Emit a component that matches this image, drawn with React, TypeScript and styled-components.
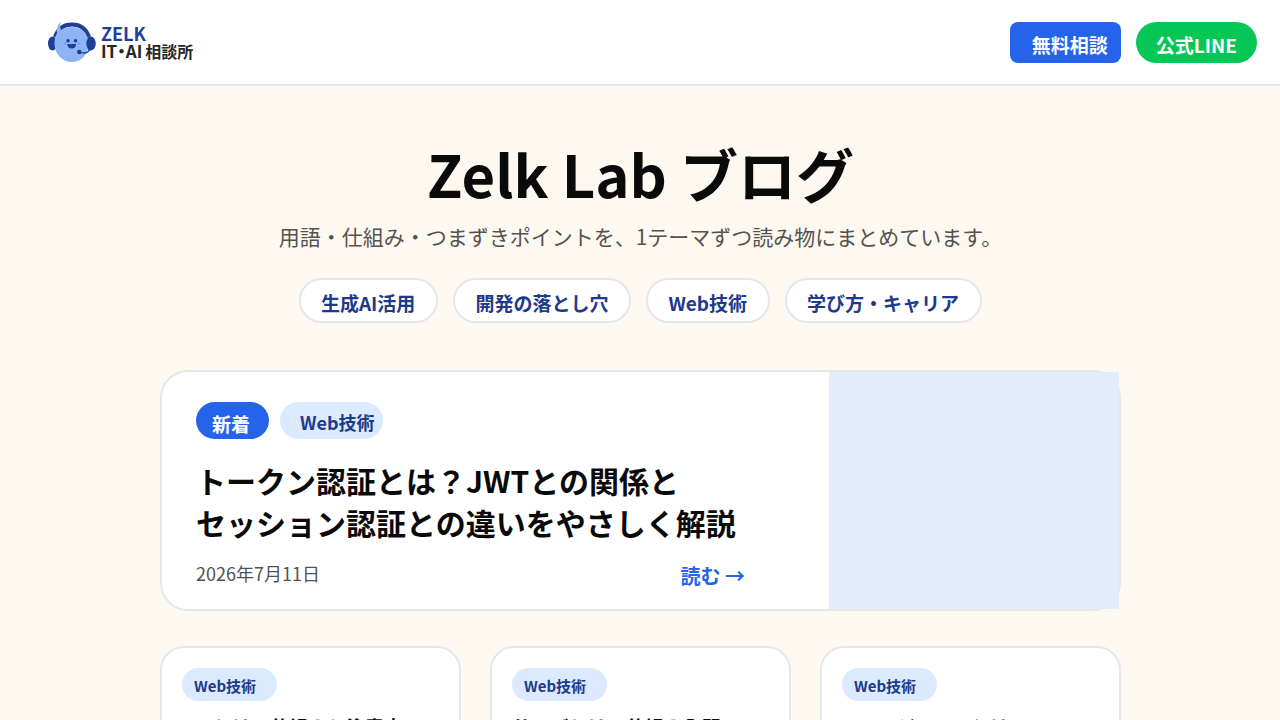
import React from "react";
import styled, { createGlobalStyle } from "styled-components";

const color = {
  cream: "#fef9f0",
  line: "#e5e7eb",
  blue: "#2563eb",
  navy: "#1e3a8a",
  sky: "#dbeafe",
  panel: "#e5edfb",
  green: "#06c755",
  ink: "#0a0a0a",
  muted: "#525252",
};

const GlobalStyle = createGlobalStyle`
  *, *::before, *::after { box-sizing: border-box; }
  body {
    margin: 0;
    background: ${color.cream};
    color: ${color.ink};
    font-family: "Noto Sans CJK JP", "Noto Sans", sans-serif;
  }
  a { color: inherit; text-decoration: none; }
  h1, h2, h3, p, ul { margin: 0; padding: 0; }
`;

const Header = styled.header`
  display: flex;
  align-items: center;
  justify-content: space-between;
  height: 86px;
  padding: 0 23px 0 47px;
  background: #fff;
  border-bottom: 2px solid ${color.line};
`;

const Logo = styled.a`
  display: flex;
  align-items: center;
  gap: 5px;
`;

const LogoText = styled.span`
  display: flex;
  flex-direction: column;
  font-size: 17px;
  font-weight: 700;
  line-height: 17px;
`;

const LogoName = styled.span`
  font-size: 18px;
  color: #1e3f9a;
`;

const LogoOffice = styled.span`
  display: flex;
  align-items: baseline;
  gap: 3px;
  color: #262626;
  font-feature-settings: "halt";
`;

const LogoKanji = styled.span`
  font-size: 16px;
`;

const Actions = styled.nav`
  display: flex;
  gap: 15px;
`;

const ActionButton = styled.button<{ $line?: boolean }>`
  height: 41px;
  padding: ${(p) => (p.$line ? "6px 20px 0" : "6px 13px 0 22px")};
  border: 0;
  border-radius: ${(p) => (p.$line ? "21px" : "8px")};
  background: ${(p) => (p.$line ? color.green : color.blue)};
  color: #fff;
  font: inherit;
  font-size: 19px;
  font-weight: 700;
  line-height: 28px;
  cursor: pointer;
`;

const Main = styled.main`
  padding: 51px 159px 48px 160px;
`;

const Hero = styled.section`
  display: flex;
  flex-direction: column;
  align-items: center;
  text-align: center;
`;

const PageTitle = styled.h1`
  font-size: 58px;
  font-weight: 700;
  line-height: 72px;
`;

const Lead = styled.p`
  margin-top: 12px;
  font-size: 21px;
  line-height: 30px;
  color: ${color.muted};
`;

const ChipList = styled.ul`
  display: flex;
  flex-wrap: wrap;
  justify-content: center;
  gap: 15px;
  margin-top: 27px;
  list-style: none;
`;

const Chip = styled.a`
  display: flex;
  align-items: center;
  height: 45px;
  padding: 4px 21px 0 20px;
  border: 2px solid ${color.line};
  border-radius: 23px;
  background: #fff;
  color: ${color.navy};
  font-size: 19px;
  font-weight: 700;
  line-height: 28px;
`;

const Featured = styled.article`
  display: flex;
  min-height: 241px;
  margin-top: 47px;
  border: 2px solid ${color.line};
  border-radius: 28px;
  background: #fff;
`;

const FeaturedBody = styled.div`
  flex: 1;
  padding: 30px 84px 16px 34px;
`;

const FeaturedPanel = styled.div`
  flex: 0 0 290px;
  background: ${color.panel};
`;

const TagRow = styled.div`
  display: flex;
  gap: 11px;
`;

const NewTag = styled.span`
  display: flex;
  align-items: center;
  height: 37px;
  padding: 6px 19px 0 16px;
  border-radius: 19px;
  background: ${color.blue};
  color: #fff;
  font-size: 19px;
  font-weight: 700;
  line-height: 28px;
`;

const Tag = styled.span<{ $small?: boolean }>`
  display: inline-flex;
  align-items: center;
  height: ${(p) => (p.$small ? "33px" : "37px")};
  padding: ${(p) => (p.$small ? "3px 21px 0 12px" : "3px 8px 0 20px")};
  border-radius: 19px;
  background: ${color.sky};
  color: ${color.navy};
  font-size: ${(p) => (p.$small ? "15px" : "18px")};
  font-weight: 700;
  line-height: 26px;
`;

const FeaturedTitle = styled.h2`
  margin-top: 20px;
  font-size: 30px;
  font-weight: 700;
  line-height: 42px;
`;

const FeaturedFoot = styled.div`
  display: flex;
  align-items: flex-start;
  justify-content: space-between;
  margin-top: 17px;
`;

const PostDate = styled.time`
  font-size: 18px;
  line-height: 26px;
  color: ${color.muted};
`;

const ReadLink = styled.a`
  font-size: 20px;
  font-weight: 700;
  line-height: 32px;
  color: ${color.blue};
`;

const CardGrid = styled.section`
  display: grid;
  grid-template-columns: repeat(3, 1fr);
  gap: 29px;
  margin-top: 35px;
`;

const Card = styled.article`
  min-height: 220px;
  padding: 20px;
  border: 2px solid ${color.line};
  border-radius: 24px;
  background: #fff;
`;

const CardTitle = styled.h3`
  margin-top: 12px;
  font-size: 19px;
  font-weight: 700;
  line-height: 28px;
`;

const Mascot = () => (
  <svg width="49" height="42" viewBox="0 0 49 42" aria-hidden="true">
    <path d="M8 16C11 7 17 3.500 25 3.500S39 7 42 16" fill="none" stroke="#1e3f94" strokeWidth="4" />
    <ellipse cx="5.500" cy="22.500" rx="4.500" ry="7" fill="#1e3f94" />
    <ellipse cx="43.500" cy="22.500" rx="4.800" ry="7" fill="#1e3f94" />
    <path
      d="M14 0.500C10.500 3.500 9.200 8 10 12C8.300 15 7.500 19 7.500 23C7.800 33.500 15.500 41 25 41S41.500 33 41.500 23C41.500 12.500 35 6 25 6C20.500 6 17 7 14 9C12.800 6 12.700 3.500 14 0.500Z"
      fill="#8db4f5"
    />
    <ellipse cx="44" cy="22.500" rx="4.700" ry="6.800" fill="#1e3f94" />
    <circle cx="21" cy="19.700" r="1.700" fill="#1e3f94" />
    <circle cx="28.500" cy="19.700" r="1.700" fill="#1e3f94" />
    <circle cx="18" cy="22.500" r="1.300" fill="#779fe8" />
    <circle cx="31.500" cy="22.500" r="1.300" fill="#779fe8" />
    <path d="M20.200 23H29.200C29 26 27 27.500 24.700 27.500S20.400 26 20.200 23Z" fill="#1e3f94" />
    <path d="M43 28C41.500 31.500 37.500 33 32 31" fill="none" stroke="#1e3f94" strokeWidth="1.300" />
    <circle cx="32.300" cy="31" r="2.300" fill="#1e3f94" />
  </svg>
);

const topics = ["生成AI活用", "開発の落とし穴", "Web技術", "学び方・キャリア"];

const posts = [
  { tag: "Web技術", title: "APIとは？仕組みと注意点" },
  { tag: "Web技術", title: "サーバとは？仕組み入門" },
  { tag: "Web技術", title: "CSSモジュールとは？" },
];

export default function App() {
  return (
    <>
      <GlobalStyle />
      <Header>
        <Logo href="#">
          <Mascot />
          <LogoText>
            <LogoName>ZELK</LogoName>
            <LogoOffice>
              <span>IT・AI</span>
              <LogoKanji>相談所</LogoKanji>
            </LogoOffice>
          </LogoText>
        </Logo>
        <Actions>
          <ActionButton type="button">無料相談</ActionButton>
          <ActionButton type="button" $line>
            公式LINE
          </ActionButton>
        </Actions>
      </Header>
      <Main>
        <Hero>
          <PageTitle>Zelk Lab ブログ</PageTitle>
          <Lead>用語・仕組み・つまずきポイントを、1テーマずつ読み物にまとめています。</Lead>
          <ChipList>
            {topics.map((topic) => (
              <li key={topic}>
                <Chip href="#">{topic}</Chip>
              </li>
            ))}
          </ChipList>
        </Hero>
        <Featured>
          <FeaturedBody>
            <TagRow>
              <NewTag>新着</NewTag>
              <Tag>Web技術</Tag>
            </TagRow>
            <FeaturedTitle>
              トークン認証とは？JWTとの関係と
              <br />
              セッション認証との違いをやさしく解説
            </FeaturedTitle>
            <FeaturedFoot>
              <PostDate dateTime="2026-07-11">2026年7月11日</PostDate>
              <ReadLink href="#">読む →</ReadLink>
            </FeaturedFoot>
          </FeaturedBody>
          <FeaturedPanel />
        </Featured>
        <CardGrid>
          {posts.map((post) => (
            <Card key={post.title}>
              <Tag $small>{post.tag}</Tag>
              <CardTitle>{post.title}</CardTitle>
            </Card>
          ))}
        </CardGrid>
      </Main>
    </>
  );
}
